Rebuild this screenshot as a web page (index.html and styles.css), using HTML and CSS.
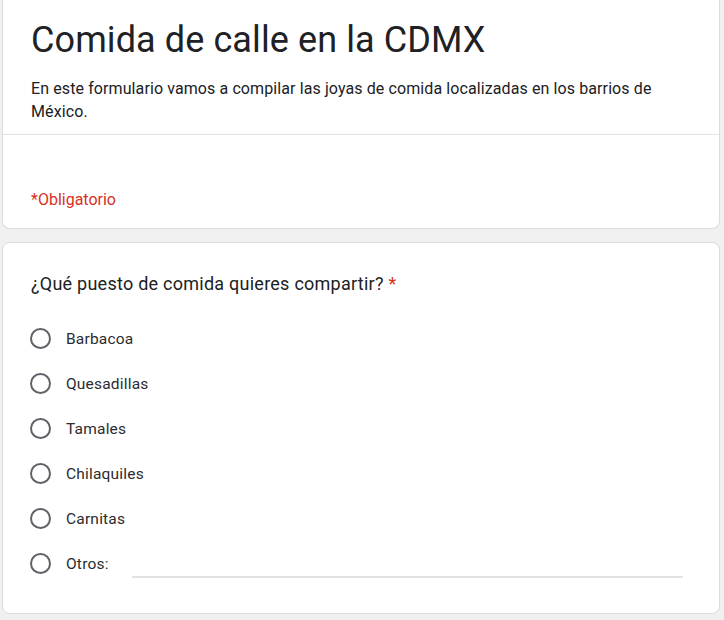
FILE: index.html
```html
<!DOCTYPE html>
<html lang="es">
<head>
<meta charset="utf-8">
<title>Comida de calle en la CDMX</title>
<link rel="stylesheet" href="styles.css">
</head>
<body>
<div class="page">
  <div class="card card-head">
    <div class="head-top">
      <h1 class="title">Comida de calle en la CDMX</h1>
      <p class="desc">En este formulario vamos a compilar las joyas de comida localizadas en los barrios de México.</p>
    </div>
    <div class="head-bottom">
      <span class="required">*Obligatorio</span>
    </div>
  </div>
  <div class="card card-q">
    <div class="question">¿Qué puesto de comida quieres compartir? <span class="star">*</span></div>
    <div class="options">
      <label class="option"><span class="radio"></span><span class="label">Barbacoa</span></label>
      <label class="option"><span class="radio"></span><span class="label">Quesadillas</span></label>
      <label class="option"><span class="radio"></span><span class="label">Tamales</span></label>
      <label class="option"><span class="radio"></span><span class="label">Chilaquiles</span></label>
      <label class="option"><span class="radio"></span><span class="label">Carnitas</span></label>
      <label class="option"><span class="radio"></span><span class="label">Otros:</span><span class="other-line"></span></label>
    </div>
  </div>
</div>
</body>
</html>
```
FILE: styles.css
```css
html, body {
  margin: 0;
  padding: 0;
  background: #f0f0f0;
}
body {
  font-family: Roboto, "Liberation Sans", sans-serif;
  color: #202124;
}
.page {
  display: flex;
  flex-direction: column;
  gap: 13px;
  padding: 0 4px 0 2px;
}
.card {
  background: #fff;
  border: 1px solid #dadce0;
  border-radius: 8px;
}
.card-head {
  border-top: 0;
  border-radius: 0 0 8px 8px;
}
.head-top {
  padding: 19px 28px 11px 28px;
  border-bottom: 1px solid #e3e3e3;
}
.title {
  margin: 0;
  font-family: Roboto, "Liberation Sans", sans-serif;
  font-weight: 400;
  font-size: 36px;
  line-height: 43px;
  letter-spacing: 0.1px;
  color: #202124;
}
.desc {
  margin: 15px 0 0 0;
  font-size: 16px;
  line-height: 23px;
  letter-spacing: 0.1px;
  color: #202124;
}
.head-bottom {
  padding: 55px 28px 18px 28px;
}
.required {
  display: block;
  font-size: 16px;
  line-height: 20px;
  color: #d93025;
}
.card-q {
  padding: 29px 36px 27px 28px;
}
.question {
  font-size: 18px;
  line-height: 24px;
  letter-spacing: 0.25px;
  color: #202124;
}
.star {
  color: #d93025;
}
.options {
  display: flex;
  flex-direction: column;
  margin-top: 20px;
}
.option {
  display: flex;
  align-items: center;
  height: 45px;
}
.radio {
  box-sizing: border-box;
  width: 21px;
  height: 21px;
  border: 2px solid #5f6368;
  border-radius: 50%;
  flex: none;
  margin-left: -1px;
}
.label {
  margin-left: 15px;
  font-size: 15.5px;
  line-height: 20px;
  color: #2b2c2f;
  letter-spacing: 0.2px;
}
.other-line {
  flex: 1;
  align-self: flex-end;
  margin: 0 0 8px 23px;
  height: 0;
  border-bottom: 2px solid #e2e2e2;
}
```
